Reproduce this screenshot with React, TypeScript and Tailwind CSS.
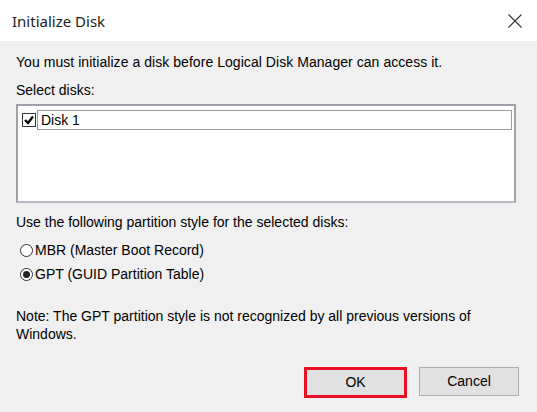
import React from "react";

export default function App() {
  const f = { fontFamily: '"Liberation Sans", Arial, sans-serif' };
  return (
    <div className="w-[537px] h-[412px] bg-[#f0f0f0] flex flex-col text-[14px] text-black overflow-hidden" style={f}>
      <div className="h-[41px] bg-white flex items-center justify-between pl-[12px] pr-[15px] shrink-0">
        <span className="text-[15px] text-[#1a1a1a] mt-[1px]" style={{ fontFamily: '"Noto Sans", "Open Sans", sans-serif' }}>Initialize Disk</span>
        <svg width="14" height="14" viewBox="0 0 14 14">
          <path d="M0.5 0.5 L13.5 13.5 M13.5 0.5 L0.5 13.5" stroke="#333" strokeWidth="1.1" />
        </svg>
      </div>
      <div className="flex flex-col pl-[16px] pr-[21px]">
        <div className="mt-[13px] leading-[16px] tracking-[0.05px]">You must initialize a disk before Logical Disk Manager can access it.</div>
        <div className="mt-[12px] leading-[16px]">Select disks:</div>
        <div className="mt-[6px] h-[99px] bg-white border-2 border-[#a0a0a8] border-b-[#b8b8c0] p-[3px] pt-[4px]">
          <div className="flex items-center h-[20px]">
            <div className="w-[14px] h-[14px] border border-[#333] bg-white flex items-center justify-center ml-[1px] mr-[1px]">
              <svg width="10" height="10" viewBox="0 0 10 10">
                <path d="M1 5 L4 8 L9 1.5" stroke="#000" strokeWidth="2.4" fill="none" />
              </svg>
            </div>
            <div className="flex-1 h-[20px] border border-[#9a9a9a] flex items-center pl-[3px] -mr-[1px]">Disk 1</div>
          </div>
        </div>
        <div className="mt-[11px] leading-[16px]">Use the following partition style for the selected disks:</div>
        <div className="mt-[12px] flex items-center h-[16px] pl-[4px]">
          <span className="w-[13px] h-[13px] rounded-full border border-[#333] bg-white mr-[2px]"></span>
          <span>MBR (Master Boot Record)</span>
        </div>
        <div className="mt-[8px] flex items-center h-[16px] pl-[4px]">
          <span className="w-[13px] h-[13px] rounded-full border border-[#333] bg-white mr-[2px] flex items-center justify-center">
            <span className="w-[7px] h-[7px] rounded-full bg-[#222]"></span>
          </span>
          <span>GPT (GUID Partition Table)</span>
        </div>
        <div className="mt-[25px] leading-[18px]">
          Note: The GPT partition style is not recognized by all previous versions of
          <br />
          Windows.
        </div>
        <div className="mt-[24px] flex justify-end gap-[12px] -mr-[3px]">
          <button className="w-[103px] h-[31px] bg-[#e1e1e1] border-[3px] border-[#e81123] flex items-center justify-center">OK</button>
          <button className="w-[100px] h-[29px] bg-[#e1e1e1] border border-[#adadad] flex items-center justify-center">Cancel</button>
        </div>
      </div>
    </div>
  );
}
